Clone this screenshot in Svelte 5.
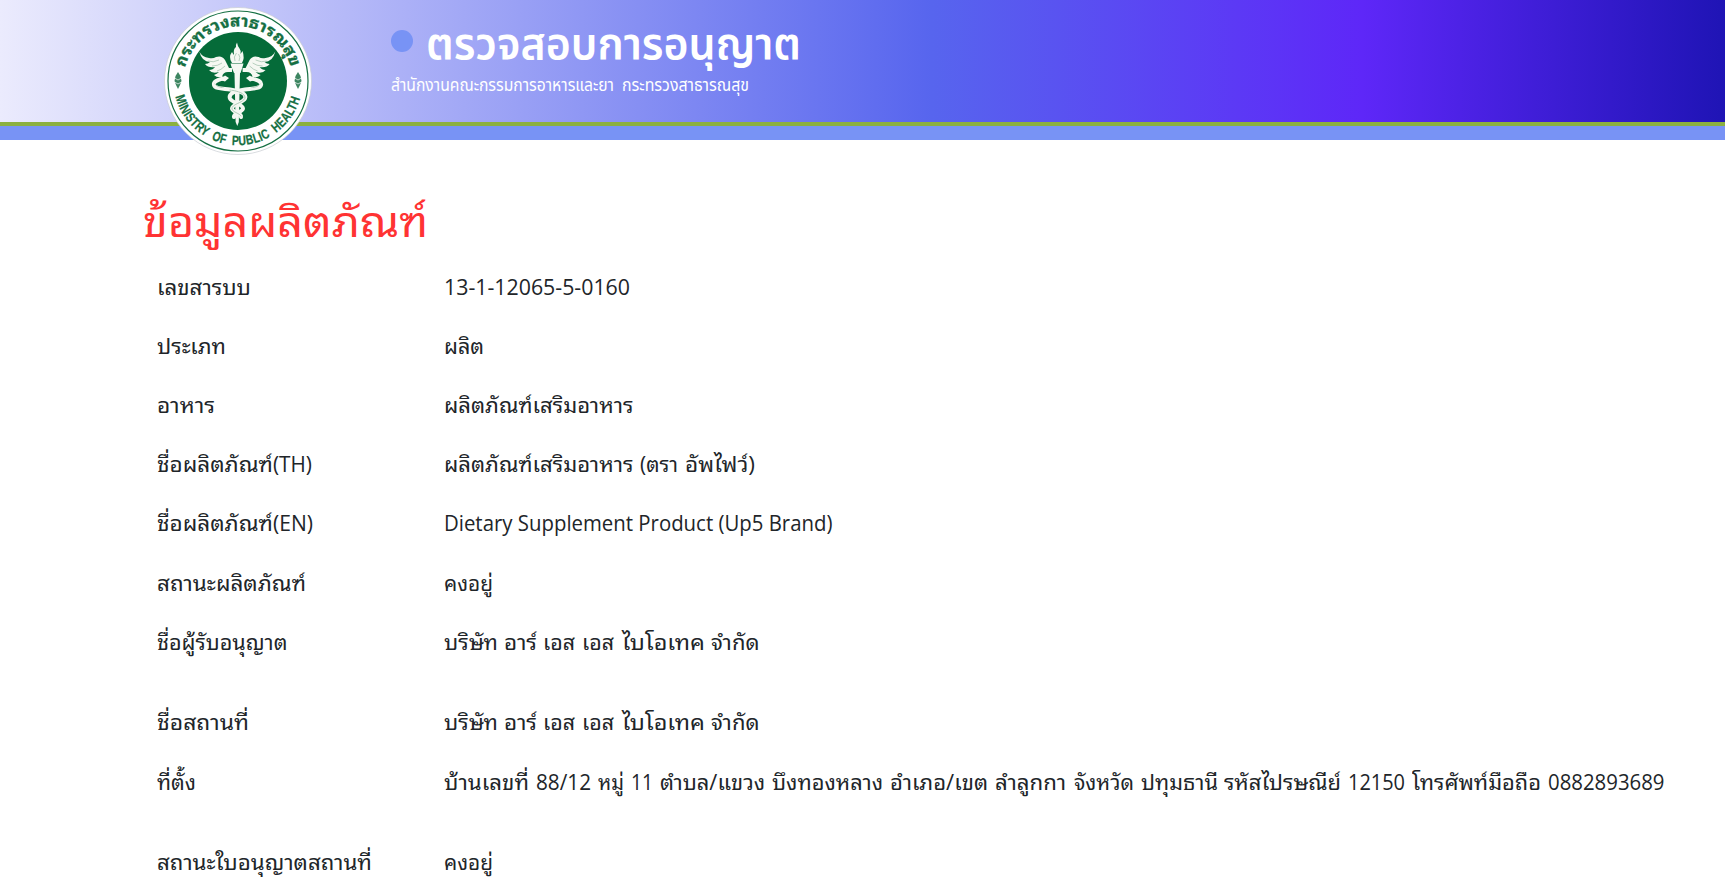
<script>
  // Every phrase is a list of [text, width, gap before] in px; the glyphs are fitted to the width.
  const company = [['บริษัท', 54], ['อาร์', 33, 6], ['เอส', 32, 6], ['เอส', 32, 7], ['ไบโอเทค', 83, 7.5], ['จำกัด', 48.5, 6.5]];
  const groups = [
    [
      { label: [['เลขสารบบ', 94]], value: [['13-1-12065-5-0160', 186]] },
      { label: [['ประเภท', 69]], value: [['ผลิต', 40]] },
      { label: [['อาหาร', 58]], value: [['ผลิตภัณฑ์เสริมอาหาร', 189.5]] },
      { label: [['ชื่อผลิตภัณฑ์', 116], ['(TH)', 39]], value: [['ผลิตภัณฑ์เสริมอาหาร', 189.5], ['(ตรา', 38, 6.5], ['อัพไฟว์)', 70, 7]] },
      { label: [['ชื่อผลิตภัณฑ์', 116], ['(EN)', 40]], value: [['Dietary Supplement Product (Up5 Brand)', 388.5]] },
      { label: [['สถานะผลิตภัณฑ์', 149]], value: [['คงอยู่', 49]] },
      { label: [['ชื่อผู้รับอนุญาต', 130.5]], value: company }
    ],
    [
      { label: [['ชื่อสถานที่', 92]], value: company },
      {
        label: [['ที่ตั้ง', 39]],
        value: [['บ้านเลขที่', 85], ['88/12', 55, 7], ['หมู่', 26, 7], ['11', 22, 7], ['ตำบล/แขวง', 105, 7],
          ['บึงทองหลาง', 111, 7], ['อำเภอ/เขต', 98, 7], ['ลำลูกกา', 71, 7], ['จังหวัด', 60, 7.5],
          ['ปทุมธานี', 77, 7], ['รหัสไปรษณีย์', 117, 6.5], ['12150', 57, 6.5], ['โทรศัพท์มือถือ', 129, 7.5], ['0882893689', 116.5, 6.5]]
      }
    ],
    [{ label: [['สถานะใบอนุญาตสถานที่', 215]], value: [['คงอยู่', 49]] }]
  ];

  function fit(node, width) {
    node.style.transform = `scaleX(${width / node.getBoundingClientRect().width})`;
  }
</script>

{#snippet phrase(words)}
  <span class="phrase">
    {#each words as [text, width, gap = 0]}
      <span class="word" style="width: {width}px; margin-left: {gap}px"><span class="glyphs" use:fit={width}>{text}</span></span>
    {/each}
  </span>
{/snippet}

<header>
  <div class="banner">
    <svg class="seal" viewBox="0 0 150 150" role="img" aria-label="Ministry of Public Health">
      <defs>
        <path id="arc-top" d="M22.1 61.8A54.5 54.5 0 0 1 127.9 61.8" />
        <path id="arc-bottom" d="M12.2 89.5A64.5 64.5 0 0 0 137.8 89.5" />
        <g id="wing">
          <path d="M36.3 45.5Q39 51 46 52Q50 53 53 51Q59 49 62 54L66 62H69V66H65Q60 66 59 71Q54 72 51 69Q54 68 56 66Q49 68 46 64Q50 64 52 61Q45 62 42 58Q45 58 47 56Q39 56 36.3 45.5Z" fill="#f5f8f2" />
          <path d="M45 55Q50 57 56 54M49 60Q55 60 59 57M54 65Q58 64 62 60" fill="none" stroke="#8bb49b" stroke-width=".6" />
        </g>
      </defs>
      <circle cx="75" cy="75" r="73.5" fill="#fff" stroke="#c9cdd3" stroke-width=".7" />
      <circle cx="75" cy="75" r="70" fill="none" stroke="#156f43" stroke-width="1.2" />
      <circle cx="75" cy="75" r="49" fill="#056b39" />
      <text class="ring thai"><textPath href="#arc-top" textLength="144" lengthAdjust="spacingAndGlyphs">กระทรวงสาธารณสุข</textPath></text>
      <text class="ring latin"><textPath href="#arc-bottom" startOffset="1" textLength="169" lengthAdjust="spacingAndGlyphs">MINISTRY OF PUBLIC HEALTH</textPath></text>
      <g fill="#3d8561">
        <path d="M15 66L17.5 70L18.5 75L17 79L15 83L13 79L11.5 75L12.5 70ZM135 66L137.5 70L138.5 75L137 79L135 83L133 79L131.5 75L132.5 70Z" />
        <path d="M11.5 72L15 74L18.5 72M11.5 76L15 78L18.5 76M131.5 72L135 74L138.5 72M131.5 76L135 78L138.5 76" fill="none" stroke="#fff" stroke-width=".7" />
      </g>
      <use href="#wing" />
      <use href="#wing" transform="matrix(-1 0 0 1 148.6 0)" />
      <path d="M69 57Q65 51 69 46Q70 48 71 49Q70 43 73 41Q72.5 39 74 36.5Q74.5 40 76.5 42.5Q78.5 45 77.5 48L79.5 45Q82 52 79 57Z" fill="#f5f8f2" />
      <path d="M72 55Q70 51 73.5 47M76 55Q78 51 75.5 48" fill="none" stroke="#8bb49b" stroke-width=".6" />
      <path d="M67.5 57.5H80.5L79.5 61L77.5 67H71L68.5 61ZM71.5 67H77L75.8 116L74.3 120L72.6 116Z" fill="#f5f8f2" />
      <g fill="none" stroke-linecap="round" stroke-linejoin="round">
        <path d="M60 72.5C55 74 50 75 51 79C52 83 60 82.5 67 83.500C76 85 84 87 82 92.5C80 97 69 98 69 102.5C69 106 79 107 78 111" stroke="#f5f8f2" stroke-width="4" />
        <path d="M88.6 72.5C94 74 99 75 98 79C97 83 89 82.5 82 83.5C73 85 65 87 67 92.5C69 97 80 98 80 102.5C80 106 70 107 71 111" stroke="#f5f8f2" stroke-width="4" />
        <path d="M67 84Q82 86 82 92C80 97 69 98 69 102.5C69 106 76 107 78 110M52 78Q54 81 60 81.5M97 78Q95 81 89 81.5" stroke="#8bb49b" stroke-width=".7" stroke-dasharray="1.2 1" />
      </g>
      <path d="M57 74L62 69.5L66 72L62 75.5ZM92 74L87 69.5L83 72L87 75.5Z" fill="#f5f8f2" />
    </svg>
    <div class="titles">
      <h1><i class="dot"></i>{@render phrase([['ตรวจสอบการอนุญาต', 375]])}</h1>
      <p>{@render phrase([['สำนักงานคณะกรรมการอาหารและยา', 223], ['กระทรวงสาธารณสุข', 127, 7.5]])}</p>
    </div>
  </div>
  <div class="stripe"></div>
</header>

<main>
  <h2>{@render phrase([['ข้อมูลผลิตภัณฑ์', 285]])}</h2>
  {#each groups as rows}
    <dl>
      {#each rows as row}
        <div class="row">
          <dt>{@render phrase(row.label)}</dt>
          <dd>{@render phrase(row.value)}</dd>
        </div>
      {/each}
    </dl>
  {/each}
</main>

<style>
  :global(body) {
    margin: 0;
    height: 886px;
    overflow: hidden;
    background: #fff;
    color: #212529;
    font: 21.5px/32px 'Open Sans', 'Noto Sans Thai Looped', 'Loma', 'Noto Sans Thai', 'Noto Sans', sans-serif;
  }
  h1, h2, p, dl, dd { margin: 0; font-weight: 400; }
  .phrase { display: inline-flex; white-space: nowrap; }
  .word { display: block; flex: none; }
  .glyphs { display: inline-block; transform-origin: 0 50%; }

  .banner {
    display: flex;
    box-sizing: border-box;
    height: 122px;
    padding-left: 163px;
    background: linear-gradient(90deg, #ebebfd 0%, #b5b9f8 20%, #5765ee 54%, #5e27f8 79%, #1f14b5 100%);
  }
  .seal { position: relative; flex: none; width: 150px; height: 150px; margin-top: 5.5px; z-index: 1; }
  .ring { fill: #156f43; font-weight: 700; }
  .thai { font-size: 16px; stroke: #156f43; stroke-width: .3px; }
  .latin { font-family: 'Liberation Sans', sans-serif; font-size: 13.5px; word-spacing: 4px; letter-spacing: .4px; stroke: #156f43; stroke-width: .25px; }
  .titles { padding: 13px 0 0 78px; color: #fff; font-family: 'Open Sans', 'Noto Sans Thai', sans-serif; }
  h1 { display: flex; align-items: center; gap: 13px; height: 58px; font-size: 44px; line-height: 58px; font-weight: 600; }
  .dot { width: 22px; height: 22px; margin-bottom: 2px; border-radius: 50%; background: #7893f5; }
  p { height: 26px; font-size: 17.5px; line-height: 26px; }
  .stripe { height: 14px; border-top: 4px solid #8bb03f; background: #7893f5; }

  main { padding: 51px 0 0 143px; }
  h2 { height: 66px; color: #f33; font-size: 42px; line-height: 60px; }
  dl { padding: 0 0 21.5px 14px; }
  .row { display: grid; grid-template-columns: 287px 1fr; height: 59.2px; align-items: center; }
</style>
